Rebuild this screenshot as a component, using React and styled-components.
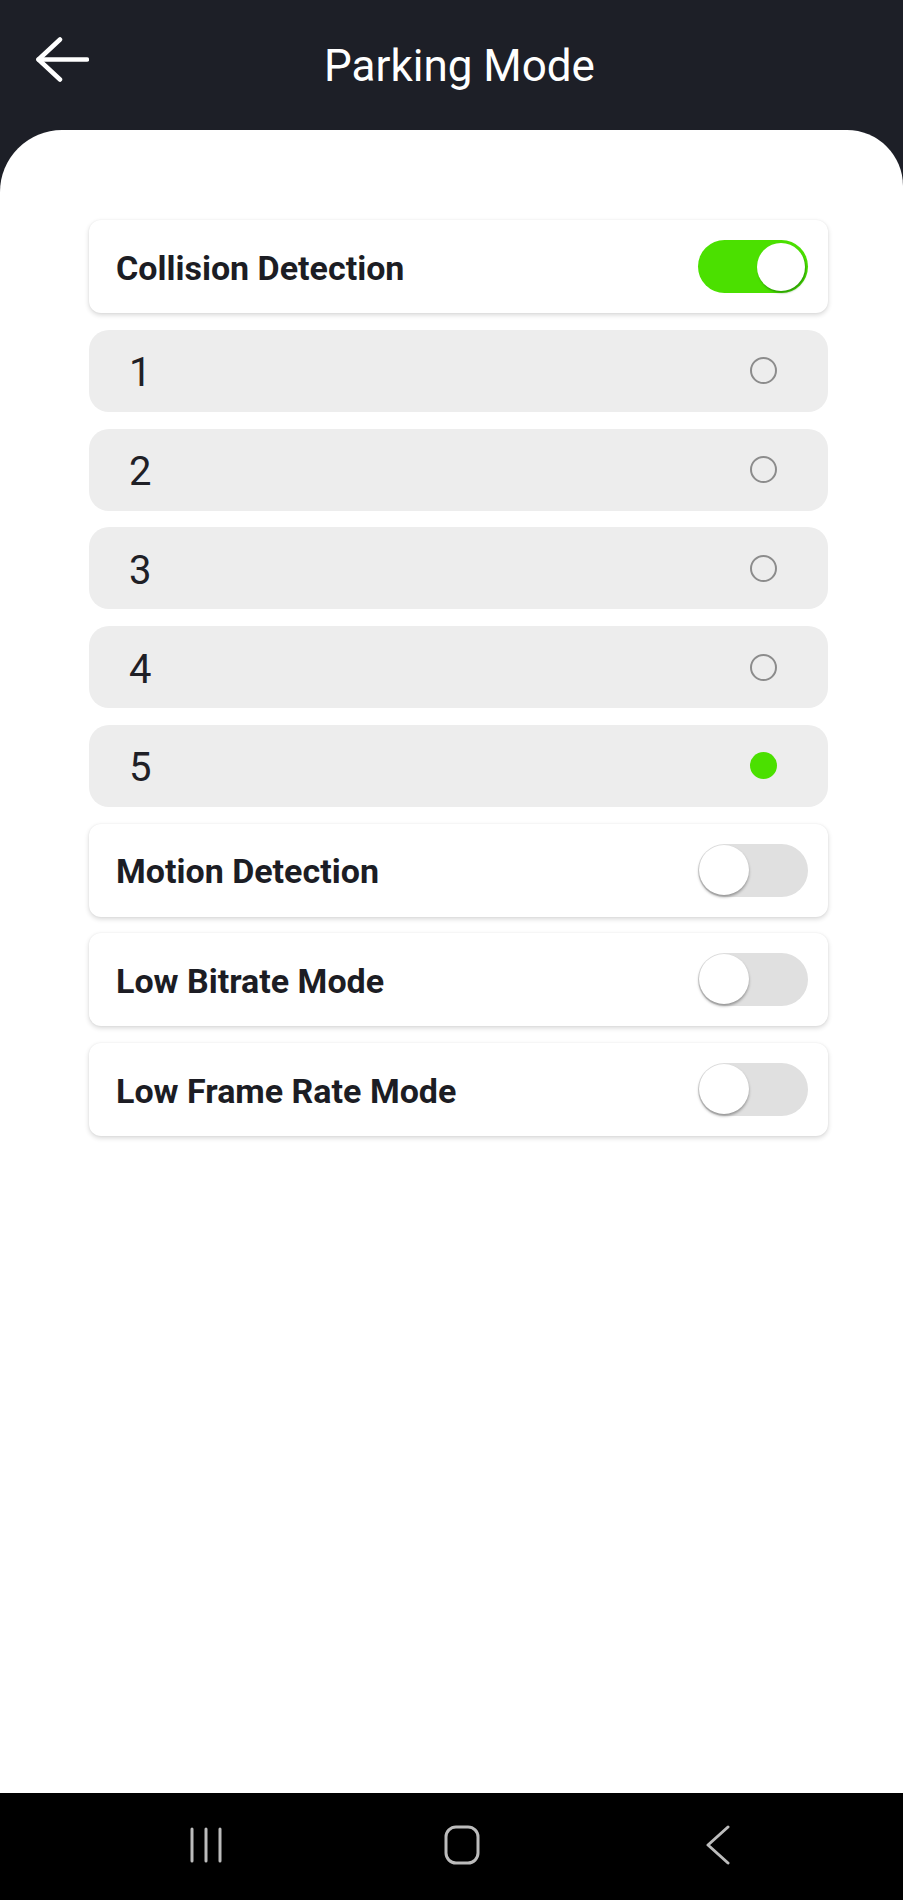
import { useState } from 'react';
import styled, { createGlobalStyle } from 'styled-components';

const GlobalStyle = createGlobalStyle`
  html, body { margin: 0; padding: 0; }
  body { font-family: Roboto, "Noto Sans", sans-serif; background: #1d1f27; }
  * { box-sizing: border-box; }
`;

const Screen = styled.div`
  display: flex;
  flex-direction: column;
  height: 100vh;
  background: #1d1f27;
`;

const Header = styled.header`
  height: 130px;
  flex-shrink: 0;
  display: flex;
  align-items: flex-start;
  padding: 0 73px 0 36px;
`;

const BackButton = styled.button`
  margin-top: 37px;
  width: 53px;
  height: 45px;
  padding: 0;
  border: 0;
  background: none;
  display: flex;
`;

const Title = styled.h1`
  flex: 1;
  margin: 44px 0 0;
  text-align: center;
  color: #ffffff;
  font-size: 44px;
  line-height: 44px;
  font-weight: 400;
`;

const Panel = styled.main`
  flex: 1;
  background: #ffffff;
  border-radius: 62px 56px 0 0;
  padding: 90px 75px 0 89px;
`;

const List = styled.div`
  display: flex;
  flex-direction: column;
  gap: 16.75px;
`;

const Card = styled.div`
  height: 93px;
  display: flex;
  align-items: center;
  justify-content: space-between;
  padding: 0 20px 0 27px;
  background: #ffffff;
  border-radius: 12px;
  box-shadow: 0 2px 5px rgba(0, 0, 0, 0.16), 0 0 2px rgba(0, 0, 0, 0.06);
`;

const CardLabel = styled.span`
  padding-top: 2px;
  color: #1c1d24;
  font-size: 34px;
  font-weight: 700;
`;

const OptionRow = styled.div`
  height: 82px;
  display: flex;
  align-items: center;
  justify-content: space-between;
  padding: 0 51px 0 40px;
  background: #ededed;
  border-radius: 20px;
`;

const OptionLabel = styled.span`
  padding-top: 4px;
  color: #1f2026;
  font-size: 40px;
  font-weight: 400;
`;

const Radio = styled.span`
  width: 27px;
  height: 27px;
  border-radius: 50%;
  border: ${p => (p.$checked ? 'none' : '2px solid #8c8c8c')};
  background: ${p => (p.$checked ? '#4be000' : 'transparent')};
`;

const Track = styled.button`
  position: relative;
  width: 110px;
  height: 53px;
  padding: 0;
  border: 0;
  border-radius: 27px;
  background: ${p => (p.$on ? '#4be000' : '#e0e0e0')};
  cursor: pointer;
`;

const Thumb = styled.span`
  position: absolute;
  top: ${p => (p.$on ? '3px' : '1px')};
  left: ${p => (p.$on ? '59px' : '1px')};
  width: ${p => (p.$on ? '48px' : '50px')};
  height: ${p => (p.$on ? '48px' : '50px')};
  border-radius: 50%;
  background: #ffffff;
  box-shadow: ${p =>
    p.$on
      ? '1px 2px 2px rgba(20, 110, 0, 0.55)'
      : '0 2px 3px rgba(0, 0, 0, 0.35)'};
`;

const NavBar = styled.nav`
  height: 107px;
  flex-shrink: 0;
  background: #000000;
  display: flex;
  align-items: center;
  justify-content: center;
  gap: 196px;
  padding: 0 0 3px 21px;
`;

const NavIcon = styled.svg`
  width: 60px;
  height: 40px;
  stroke: #bcbcbc;
  stroke-width: 3;
  fill: none;
  stroke-linecap: round;
  stroke-linejoin: round;
`;

const Toggle = ({ on, onClick }) => (
  <Track $on={on} onClick={onClick}>
    <Thumb $on={on} />
  </Track>
);

const options = ['1', '2', '3', '4', '5'];

export default function App() {
  const [collision, setCollision] = useState(true);
  const [level, setLevel] = useState('5');
  const [motion, setMotion] = useState(false);
  const [bitrate, setBitrate] = useState(false);
  const [frameRate, setFrameRate] = useState(false);

  return (
    <>
      <GlobalStyle />
      <Screen>
        <Header>
          <BackButton aria-label="back">
            <svg width="53" height="45" viewBox="0 0 53 45" fill="none" stroke="#ffffff" strokeWidth="4.5" strokeLinecap="round" strokeLinejoin="round">
              <path d="M2.5 22.5 H51" />
              <path d="M24 2.5 L2.5 22.5 L24 42.5" />
            </svg>
          </BackButton>
          <Title>Parking Mode</Title>
        </Header>

        <Panel>
          <List>
            <Card>
              <CardLabel>Collision Detection</CardLabel>
              <Toggle on={collision} onClick={() => setCollision(!collision)} />
            </Card>
            {options.map(o => (
              <OptionRow key={o} onClick={() => setLevel(o)}>
                <OptionLabel>{o}</OptionLabel>
                <Radio $checked={level === o} />
              </OptionRow>
            ))}
            <Card>
              <CardLabel>Motion Detection</CardLabel>
              <Toggle on={motion} onClick={() => setMotion(!motion)} />
            </Card>
            <Card>
              <CardLabel>Low Bitrate Mode</CardLabel>
              <Toggle on={bitrate} onClick={() => setBitrate(!bitrate)} />
            </Card>
            <Card>
              <CardLabel>Low Frame Rate Mode</CardLabel>
              <Toggle on={frameRate} onClick={() => setFrameRate(!frameRate)} />
            </Card>
          </List>
        </Panel>

        <NavBar>
          <NavIcon viewBox="0 0 60 40">
            <path d="M16 4 V36 M30 4 V36 M44 4 V36" />
          </NavIcon>
          <NavIcon viewBox="0 0 60 40">
            <rect x="14" y="2" width="32" height="36" rx="10" />
          </NavIcon>
          <NavIcon viewBox="0 0 60 40">
            <path d="M40 2 L20 20 L40 38" />
          </NavIcon>
        </NavBar>
      </Screen>
    </>
  );
}
